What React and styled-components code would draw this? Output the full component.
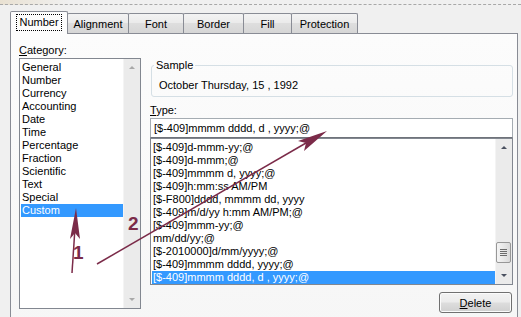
import React from "react";
import styled, { createGlobalStyle } from "styled-components";

const GlobalStyle = createGlobalStyle`
  html, body { margin: 0; padding: 0; background: #f0f0f0; }
  body {
    font-family: "Liberation Sans", Arial, sans-serif;
    font-size: 11px;
    color: #000;
  }
`;

const Window = styled.div`
  position: relative;
  width: 521px;
  height: 317px;
  overflow: hidden;
  background: #f0f0f0;
`;

const TopEdge = styled.div`
  height: 4px;
  border-bottom: 1px dashed #a8a8a8;
  background: linear-gradient(90deg, #e9e1d2 0, #f0f0f0 70px);
`;

const Dialog = styled.div`
  padding: 6px 3px 0 10px;
`;

const TabRow = styled.div`
  display: flex;
  align-items: flex-end;
  height: 22px;
`;

const Tab = styled.div`
  width: ${(p) => p.$w}px;
  box-sizing: border-box;
  height: ${(p) => (p.$active ? 23 : 20)}px;
  margin-bottom: ${(p) => (p.$active ? -1 : 0)}px;
  margin-right: -1px;
  position: relative;
  z-index: ${(p) => (p.$active ? 2 : 1)};
  display: flex;
  align-items: center;
  justify-content: center;
  border: 1px solid #898c95;
  border-bottom: none;
  border-radius: 2px 2px 0 0;
  background: ${(p) =>
    p.$active
      ? "#fcfcfc"
      : "linear-gradient(#f3f3f3 0, #ebebeb 45%, #dedede 50%, #d6d6d6 100%)"};
  padding-bottom: ${(p) => (p.$active ? 1 : 0)}px;
`;

const FocusText = styled.span`
  padding: 2px 3px;
  outline: 1px dotted #000;
  outline-offset: -1px;
  line-height: 13px;
`;

const Panel = styled.div`
  width: 508px;
  height: 300px;
  box-sizing: border-box;
  border: 1px solid #898c95;
  background: linear-gradient(#fcfcfc 0, #f6f6f6 100%);
  display: flex;
  gap: 9px;
  padding: 10px 4px 0 8px;
`;

const LeftColumn = styled.div`
  width: 122px;
  display: flex;
  flex-direction: column;
`;

const RightColumn = styled.div`
  width: 363px;
  display: flex;
  flex-direction: column;
  padding-top: 15px;
`;

const Label = styled.div`
  line-height: 13px;
  height: 13px;
  margin-left: ${(p) => p.$indent || 0}px;
  margin-top: ${(p) => p.$top || 0}px;
  u { text-decoration: underline; }
`;

const ListBox = styled.div`
  height: ${(p) => p.$h}px;
  margin-top: ${(p) => p.$top || 0}px;
  box-sizing: border-box;
  border: 1px solid #828790;
  background: #fff;
  display: flex;
`;

const Items = styled.div`
  flex: 1;
  padding: 2px 0 0 1px;
  overflow: hidden;
`;

const Item = styled.div`
  height: 13px;
  line-height: 13px;
  padding-left: 1px;
  white-space: nowrap;
  background: ${(p) => (p.$selected ? "#3399ff" : "transparent")};
  color: ${(p) => (p.$selected ? "#fff" : "#000")};
`;

const ScrollBar = styled.div`
  width: 17px;
  display: flex;
  flex-direction: column;
  background: #ebebeb;
  border-left: 1px solid #f4f4f4;
  box-sizing: border-box;
`;

const ArrowButton = styled.div`
  height: 17px;
  display: flex;
  align-items: center;
  justify-content: center;
  &::after {
    content: "";
    border-left: 3px solid transparent;
    border-right: 3px solid transparent;
    ${(p) => (p.$down ? "border-top" : "border-bottom")}: 3px solid
      ${(p) => (p.$disabled ? "#a8a8a8" : "#4a5160")};
  }
`;

const Track = styled.div`
  flex: 1;
  display: flex;
  flex-direction: column;
  justify-content: flex-end;
  padding: 0 1px 4px 0;
`;

const Thumb = styled.div`
  height: 21px;
  box-sizing: border-box;
  border: 1px solid #979797;
  border-radius: 2px;
  background: linear-gradient(90deg, #f4f4f4 0, #e8e8e8 50%, #d9d9d9 100%);
  display: flex;
  flex-direction: column;
  align-items: center;
  justify-content: center;
  gap: 1px;
  span {
    width: 7px;
    height: 1px;
    background: #6b6b6b;
  }
`;

const GroupBox = styled.fieldset`
  margin: 0 0 0 1px;
  padding: 7px 0 4px 2px;
  border: 1px solid #d5dfe5;
  border-radius: 3px;
`;

const Legend = styled.legend`
  padding: 0 2px;
  line-height: 13px;
`;

const SampleText = styled.div`
  line-height: 13px;
  margin-left: 5px;
`;

const TextInput = styled.div`
  height: 20px;
  margin-top: 1px;
  box-sizing: border-box;
  border: 1px solid #a5acb2;
  border-bottom-color: #6f737a;
  background: #fff;
  padding-left: 3px;
  line-height: 18px;
`;

const ButtonRow = styled.div`
  display: flex;
  justify-content: flex-end;
  margin-top: 7px;
  padding-right: 1px;
`;

const Button = styled.div`
  width: 73px;
  height: 21px;
  box-sizing: border-box;
  border: 1px solid #707070;
  border-radius: 3px;
  background: linear-gradient(#f2f2f2 0, #ebebeb 48%, #dddddd 52%, #cfcfcf 100%);
  box-shadow: inset 0 0 0 1px #fbfbfb;
  display: flex;
  align-items: center;
  justify-content: center;
`;

const Overlay = styled.svg`
  position: absolute;
  left: 0;
  top: 0;
  pointer-events: none;
`;

const tabs = [
  { label: "Number", w: 58, active: true },
  { label: "Alignment", w: 62 },
  { label: "Font", w: 56 },
  { label: "Border", w: 61 },
  { label: "Fill", w: 49 },
  { label: "Protection", w: 67 },
];

const categories = [
  "General", "Number", "Currency", "Accounting", "Date", "Time",
  "Percentage", "Fraction", "Scientific", "Text", "Special", "Custom",
];

const formats = [
  "[$-409]d-mmm-yy;@",
  "[$-409]d-mmm;@",
  "[$-409]mmmm d, yyyy;@",
  "[$-409]h:mm:ss AM/PM",
  "[$-F800]dddd, mmmm dd, yyyy",
  "[$-409]m/d/yy h:mm AM/PM;@",
  "[$-409]mmm-yy;@",
  "mm/dd/yy;@",
  "[$-2010000]d/mm/yyyy;@",
  "[$-409]mmmm dddd, yyyy;@",
  "[$-409]mmmm dddd, d , yyyy;@",
];

const ARROW = "#7b2b49";

const Annotations = () => (
  <Overlay width="521" height="317" viewBox="0 0 521 317">
    <line x1="72" y1="273" x2="75" y2="228" stroke={ARROW} strokeWidth="1.5" />
    <polygon points="76,208 70,239 75,233 80,239" fill={ARROW} />
    <line x1="97" y1="264" x2="306" y2="143" stroke={ARROW} strokeWidth="1.5" />
    <polygon points="327,131 298,141 306,143 304,151" fill={ARROW} />
    <text x="73" y="259" fill={ARROW} fontFamily="Liberation Sans, Arial, sans-serif" fontWeight="bold" fontSize="19">1</text>
    <text x="128" y="230" fill={ARROW} fontFamily="Liberation Sans, Arial, sans-serif" fontWeight="bold" fontSize="19">2</text>
  </Overlay>
);

const App = () => {
  return (
    <Window>
      <GlobalStyle />
      <TopEdge />
      <Dialog>
        <TabRow>
          {tabs.map((t) => (
            <Tab key={t.label} $w={t.w} $active={t.active}>
              {t.active ? <FocusText>{t.label}</FocusText> : t.label}
            </Tab>
          ))}
        </TabRow>
        <Panel>
          <LeftColumn>
            <Label><u>C</u>ategory:</Label>
            <ListBox $h={251} $top={1}>
              <Items>
                {categories.map((c) => (
                  <Item key={c} $selected={c === "Custom"}>{c}</Item>
                ))}
              </Items>
              <ScrollBar>
                <ArrowButton $disabled />
                <Track />
                <ArrowButton $disabled $down />
              </ScrollBar>
            </ListBox>
          </LeftColumn>
          <RightColumn>
            <GroupBox>
              <Legend>Sample</Legend>
              <SampleText>October Thursday, 15 , 1992</SampleText>
            </GroupBox>
            <Label $top={7}><u>T</u>ype:</Label>
            <TextInput>[$-409]mmmm dddd, d , yyyy;@</TextInput>
            <ListBox $h={147}>
              <Items>
                {formats.map((f, i) => (
                  <Item key={f} $selected={i === formats.length - 1}>{f}</Item>
                ))}
              </Items>
              <ScrollBar>
                <ArrowButton />
                <Track>
                  <Thumb><span /><span /><span /><span /></Thumb>
                </Track>
                <ArrowButton $down />
              </ScrollBar>
            </ListBox>
            <ButtonRow>
              <Button><u>D</u>elete</Button>
            </ButtonRow>
          </RightColumn>
        </Panel>
      </Dialog>
      <Annotations />
    </Window>
  );
};

export default App;
